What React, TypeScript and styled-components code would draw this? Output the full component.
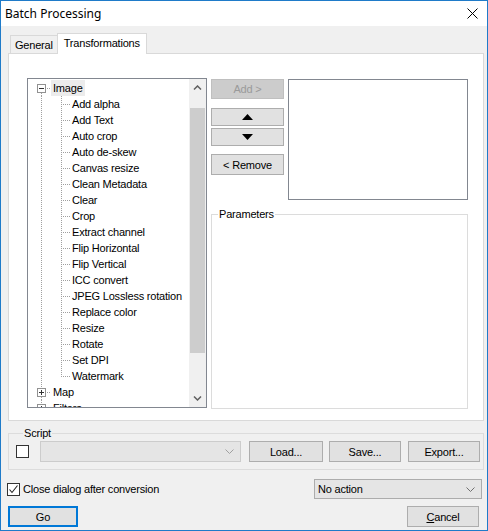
import styled, { createGlobalStyle } from 'styled-components';

const GlobalStyle = createGlobalStyle`
  html, body {
    margin: 0;
    padding: 0;
    background: #ffffff;
  }
  body {
    font-family: "Liberation Sans", Arial, sans-serif;
    font-size: 11px;
    letter-spacing: -0.2px;
    color: #000000;
  }
  * {
    box-sizing: border-box;
  }
`;

const Window = styled.div`
  width: 488px;
  height: 531px;
  border: 1px solid #1f7bc9;
  background: #f0f0f0;
  display: flex;
  flex-direction: column;
  overflow: hidden;
`;

const TitleBar = styled.div`
  height: 25px;
  flex-shrink: 0;
  background: #ffffff;
  display: flex;
  align-items: center;
  justify-content: space-between;
  padding: 0 9px 0 4px;
`;

const Title = styled.span`
  font-family: "Noto Sans", "Open Sans", sans-serif;
  font-size: 12px;
  letter-spacing: 0;
`;

const Body = styled.div`
  flex: 1;
  display: flex;
  flex-direction: column;
  padding: 7px 3px 0 7px;
`;

const TabStrip = styled.div`
  display: flex;
  align-items: flex-end;
  height: 21px;
  margin-bottom: -1px;
  padding-left: 2px;
`;

const Tab = styled.div<{ $active?: boolean }>`
  display: flex;
  align-items: center;
  height: ${(p) => (p.$active ? '21px' : '19px')};
  padding: ${(p) => (p.$active ? '0 6px 2px 6px' : '0 4px')};
  background: ${(p) => (p.$active ? '#ffffff' : '#f0f0f0')};
  border: 1px solid #d9d9d9;
  border-bottom: none;
  ${(p) => (p.$active ? 'position: relative; z-index: 1;' : 'border-right: none;')}
`;

const Panel = styled.div`
  height: 368px;
  background: #ffffff;
  border: 1px solid #d9d9d9;
  display: flex;
  align-items: flex-start;
  gap: 4px;
  padding: 24px 0 0 18px;
`;

const Tree = styled.div`
  width: 180px;
  height: 330px;
  border: 1px solid #828790;
  background: #ffffff;
  display: flex;
`;

const TreeBody = styled.div`
  flex: 1;
  overflow: hidden;
  padding-top: 1px;
`;

const TreeRow = styled.div`
  display: flex;
  align-items: center;
  height: 16px;
  white-space: nowrap;
`;

const NodeLabel = styled.span<{ $hot?: boolean }>`
  height: 16px;
  line-height: 16px;
  padding: 0 2px;
  background: ${(p) => (p.$hot ? '#ececec' : 'transparent')};
`;

const Scrollbar = styled.div`
  width: 17px;
  background: #f0f0f0;
  display: flex;
  flex-direction: column;
`;

const ScrollArrow = styled.div`
  height: 17px;
  display: flex;
  align-items: center;
  justify-content: center;
`;

const ScrollTrack = styled.div`
  flex: 1;
  padding: 12px 1px 0 1px;
`;

const ScrollThumb = styled.div`
  height: 245px;
  background: #cdcdcd;
`;

const RightColumn = styled.div`
  width: 257px;
  display: flex;
  flex-direction: column;
`;

const TopRow = styled.div`
  display: flex;
  gap: 4px;
  margin-top: 1px;
`;

const ButtonColumn = styled.div`
  width: 73px;
  display: flex;
  flex-direction: column;
`;

const Button = styled.button<{ $h?: number; $w?: number; $mt?: number; $default?: boolean }>`
  height: ${(p) => p.$h ?? 21}px;
  width: ${(p) => (p.$w ? `${p.$w}px` : '100%')};
  margin: ${(p) => p.$mt ?? 0}px 0 0 0;
  padding: 0;
  flex-shrink: 0;
  font: inherit;
  letter-spacing: inherit;
  color: #000000;
  background: #e1e1e1;
  border: ${(p) => (p.$default ? '2px solid #0078d7' : '1px solid #adadad')};
  display: flex;
  align-items: center;
  justify-content: center;

  &:disabled {
    background: #cccccc;
    border-color: #bfbfbf;
    color: #9a9a9a;
  }
`;

const ListBox = styled.div`
  width: 180px;
  height: 121px;
  border: 1px solid #828790;
  background: #ffffff;
`;

const GroupBox = styled.fieldset<{ $h: number }>`
  margin: 0;
  min-width: 0;
  height: ${(p) => p.$h}px;
  border: 1px solid #dcdcdc;
`;

const ParamsGroup = styled(GroupBox)`
  margin-top: 8px;
  padding: 0;
`;

const ScriptGroup = styled(GroupBox)`
  margin-top: 6px;
  padding: 1px 6px 7px 7px;
  display: flex;
  align-items: center;
`;

const Legend = styled.legend`
  margin-left: 6px;
  padding: 0 1px;
  line-height: 13px;
`;

const ScriptLegend = styled(Legend)`
  margin-left: 7px;
`;

const Check = styled.span`
  width: 13px;
  height: 13px;
  flex-shrink: 0;
  border: 1px solid #333333;
  background: #ffffff;
  display: flex;
  align-items: center;
  justify-content: center;
`;

const Combo = styled.div<{ $w: number; $h: number; $disabled?: boolean }>`
  width: ${(p) => p.$w}px;
  height: ${(p) => p.$h}px;
  flex-shrink: 0;
  background: #e5e5e5;
  border: 1px solid ${(p) => (p.$disabled ? '#cccccc' : '#acacac')};
  display: flex;
  align-items: center;
  justify-content: space-between;
  padding: 0 6px 0 3px;
`;

const ScriptRow = styled.div`
  display: flex;
  align-items: center;
  width: 100%;
  height: 21px;
`;

const OptionsRow = styled.div`
  display: flex;
  align-items: center;
  justify-content: space-between;
  height: 20px;
  margin-top: 9px;
  padding-right: 2px;
`;

const CheckLabel = styled.label`
  display: flex;
  align-items: center;
  gap: 3px;
  margin-left: -1px;
`;

const FooterRow = styled.div`
  display: flex;
  justify-content: space-between;
  margin-top: 7px;
  padding-right: 5px;
`;

const Mnemonic = styled.span`
  text-decoration: underline;
`;

const DOT = '#a0a0a0';

const RootGuide = ({ sign, top, bottom }: { sign: '+' | '-'; top: boolean; bottom: boolean }) => (
  <svg width={23} height={16} style={{ flexShrink: 0 }} shapeRendering="crispEdges">
    {top && <line x1={13.5} y1={0} x2={13.5} y2={4} stroke={DOT} strokeDasharray="1 1" />}
    {bottom && <line x1={13.5} y1={13} x2={13.5} y2={16} stroke={DOT} strokeDasharray="1 1" />}
    <line x1={19} y1={8.5} x2={23} y2={8.5} stroke={DOT} strokeDasharray="1 1" />
    <rect x={9.5} y={4.5} width={8} height={8} fill="#ffffff" stroke="#919191" />
    <line x1={11} y1={8.5} x2={16} y2={8.5} stroke="#333333" />
    {sign === '+' && <line x1={13.5} y1={6} x2={13.5} y2={11} stroke="#333333" />}
  </svg>
);

const ChildGuide = ({ last }: { last: boolean }) => (
  <svg width={42} height={16} style={{ flexShrink: 0 }} shapeRendering="crispEdges">
    <line x1={13.5} y1={0} x2={13.5} y2={16} stroke={DOT} strokeDasharray="1 1" />
    <line x1={33.5} y1={0} x2={33.5} y2={last ? 9 : 16} stroke={DOT} strokeDasharray="1 1" />
    <line x1={35} y1={8.5} x2={42} y2={8.5} stroke={DOT} strokeDasharray="1 1" />
  </svg>
);

const Chevron = ({ up }: { up?: boolean }) => (
  <svg width={9} height={5} viewBox="0 0 9 5">
    <path
      d={up ? 'M1 4.5 L4.5 1 L8 4.5' : 'M1 0.5 L4.5 4 L8 0.5'}
      fill="none"
      stroke="#606060"
      strokeWidth={1.5}
    />
  </svg>
);

const ThinChevron = ({ color }: { color: string }) => (
  <svg width={9} height={5} viewBox="0 0 9 5">
    <path d="M0.5 0.5 L4.5 4.5 L8.5 0.5" fill="none" stroke={color} strokeWidth={1} />
  </svg>
);

const Triangle = ({ up }: { up?: boolean }) => (
  <svg width={11} height={6} viewBox="0 0 11 6">
    <path d={up ? 'M0 6 L5.5 0 L11 6 Z' : 'M0 0 L5.5 6 L11 0 Z'} fill="#000000" />
  </svg>
);

const CheckMark = () => (
  <svg width={11} height={11} viewBox="0 0 11 11">
    <path d="M1.5 5.5 L4 8.5 L9.5 1.5" fill="none" stroke="#222222" strokeWidth={1.1} />
  </svg>
);

const imageChildren = [
  'Add alpha',
  'Add Text',
  'Auto crop',
  'Auto de-skew',
  'Canvas resize',
  'Clean Metadata',
  'Clear',
  'Crop',
  'Extract channel',
  'Flip Horizontal',
  'Flip Vertical',
  'ICC convert',
  'JPEG Lossless rotation',
  'Replace color',
  'Resize',
  'Rotate',
  'Set DPI',
  'Watermark',
];

export default function App() {
  return (
    <>
      <GlobalStyle />
      <Window>
        <TitleBar>
          <Title>Batch Processing</Title>
          <svg width={11} height={11} viewBox="0 0 11 11">
            <path d="M0.5 0.5 L10.5 10.5 M10.5 0.5 L0.5 10.5" stroke="#000000" strokeWidth={1} />
          </svg>
        </TitleBar>
        <Body>
          <TabStrip>
            <Tab>General</Tab>
            <Tab $active>Transformations</Tab>
          </TabStrip>
          <Panel>
            <Tree>
              <TreeBody>
                <TreeRow>
                  <RootGuide sign="-" top={false} bottom />
                  <NodeLabel $hot>Image</NodeLabel>
                </TreeRow>
                {imageChildren.map((name, i) => (
                  <TreeRow key={name}>
                    <ChildGuide last={i === imageChildren.length - 1} />
                    <NodeLabel>{name}</NodeLabel>
                  </TreeRow>
                ))}
                <TreeRow>
                  <RootGuide sign="+" top bottom />
                  <NodeLabel>Map</NodeLabel>
                </TreeRow>
                <TreeRow>
                  <RootGuide sign="+" top bottom={false} />
                  <NodeLabel>Filters</NodeLabel>
                </TreeRow>
              </TreeBody>
              <Scrollbar>
                <ScrollArrow>
                  <Chevron up />
                </ScrollArrow>
                <ScrollTrack>
                  <ScrollThumb />
                </ScrollTrack>
                <ScrollArrow>
                  <Chevron />
                </ScrollArrow>
              </Scrollbar>
            </Tree>
            <RightColumn>
              <TopRow>
                <ButtonColumn>
                  <Button $h={20} disabled>
                    Add &gt;
                  </Button>
                  <Button $h={18} $mt={9}>
                    <Triangle up />
                  </Button>
                  <Button $h={18} $mt={2}>
                    <Triangle />
                  </Button>
                  <Button $h={21} $mt={8}>
                    &lt; Remove
                  </Button>
                </ButtonColumn>
                <ListBox />
              </TopRow>
              <ParamsGroup $h={201}>
                <Legend>Parameters</Legend>
              </ParamsGroup>
            </RightColumn>
          </Panel>
          <ScriptGroup $h={43}>
            <ScriptLegend>Script</ScriptLegend>
            <ScriptRow>
              <Check />
              <Combo $w={201} $h={21} $disabled style={{ marginLeft: 11 }}>
                <span />
                <ThinChevron color="#a0a0a0" />
              </Combo>
              <Button $w={74} style={{ marginLeft: 8 }}>
                Load...
              </Button>
              <Button $w={72} style={{ marginLeft: 6 }}>
                Save...
              </Button>
              <Button $w={72} style={{ marginLeft: 7 }}>
                Export...
              </Button>
            </ScriptRow>
          </ScriptGroup>
          <OptionsRow>
            <CheckLabel>
              <Check>
                <CheckMark />
              </Check>
              Close dialog after conversion
            </CheckLabel>
            <Combo $w={168} $h={20}>
              <span>No action</span>
              <ThinChevron color="#707070" />
            </Combo>
          </OptionsRow>
          <FooterRow>
            <Button $w={70} $default>
              Go
            </Button>
            <Button $w={72}>
              <Mnemonic>C</Mnemonic>ancel
            </Button>
          </FooterRow>
        </Body>
      </Window>
    </>
  );
}
